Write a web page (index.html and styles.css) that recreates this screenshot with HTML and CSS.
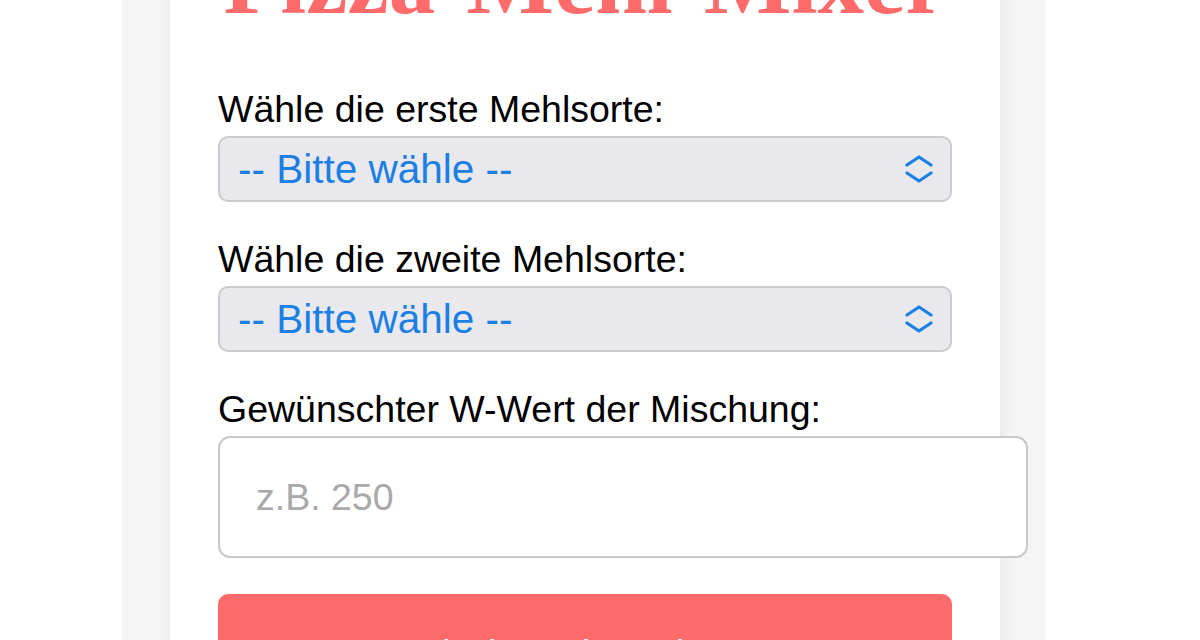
FILE: index.html
```html
<!DOCTYPE html>
<html lang="de">
<head>
    <meta charset="utf-8">
    <title>Pizza-Mehl-Mixer</title>
    <link rel="stylesheet" href="styles.css">
</head>
<body>
    <div class="band">
        <div class="card">
            <h1 class="title">Pizza-Mehl-Mixer</h1>

            <div class="field">
                <label for="mehl1">Wähle die erste Mehlsorte:</label>
                <div class="select-wrap">
                    <select id="mehl1">
                        <option>-- Bitte wähle --</option>
                    </select>
                    <svg class="chevrons" width="28" height="30" viewBox="0 0 28 30">
                        <path d="M2 10 L14 2 L26 10 M2 18 L14 26 L26 18" fill="none" stroke="#1b7fe4" stroke-width="3.2" stroke-linecap="round" stroke-linejoin="round"/>
                    </svg>
                </div>
            </div>

            <div class="field">
                <label for="mehl2">Wähle die zweite Mehlsorte:</label>
                <div class="select-wrap">
                    <select id="mehl2">
                        <option>-- Bitte wähle --</option>
                    </select>
                    <svg class="chevrons" width="28" height="30" viewBox="0 0 28 30">
                        <path d="M2 10 L14 2 L26 10 M2 18 L14 26 L26 18" fill="none" stroke="#1b7fe4" stroke-width="3.2" stroke-linecap="round" stroke-linejoin="round"/>
                    </svg>
                </div>
            </div>

            <div class="field">
                <label for="wwert">Gewünschter W-Wert der Mischung:</label>
                <input type="number" id="wwert" placeholder="z.B. 250">
            </div>

            <button class="calc-btn">Mischung berechnen</button>
        </div>
    </div>
</body>
</html>
```

FILE: styles.css
```css
body {
    margin: 0;
    background: #fff;
    font-family: "Liberation Sans", Arial, sans-serif;
    color: #000;
    overflow: hidden;
}
.band {
    width: 923px;
    margin-left: 122px;
    margin-top: -72px;
    background: #f5f5f5;
    padding-left: 48px;
    box-sizing: border-box;
    min-height: 800px;
}
.card {
    width: 830px;
    box-sizing: border-box;
    padding: 0 48px 40px;
    background: #fff;
    box-shadow: 0 0 16px rgba(0, 0, 0, 0.07);
    min-height: 800px;
}
.title {
    margin: 0 0 53px;
    font-family: "Liberation Serif", "Times New Roman", serif;
    font-size: 93px;
    font-weight: bold;
    color: #ff6b6b;
    text-align: center;
}
.field {
    margin-bottom: 36px;
}
.field label {
    display: block;
    font-size: 37.5px;
    margin-bottom: 5px;
}
.select-wrap {
    position: relative;
}
.select-wrap select {
    -webkit-appearance: none;
    appearance: none;
    width: 100%;
    height: 66px;
    margin: 0;
    padding: 0 60px 0 18px;
    border: 2px solid #cbcbcd;
    border-radius: 10px;
    background: #e9e9ed;
    color: #1b7fe4;
    font-family: "Liberation Sans", Arial, sans-serif;
    font-size: 40.5px;
}
.chevrons {
    position: absolute;
    right: 19px;
    top: 19px;
}
.field input {
    width: 100%;
    height: 118px;
    margin: 0;
    padding: 0 36px;
    border: 2px solid #c8c8c8;
    border-radius: 12px;
    background: #fff;
    font-family: "Liberation Sans", Arial, sans-serif;
    font-size: 37.5px;
}
.field input::placeholder {
    color: #a9a9a9;
}
.calc-btn {
    display: block;
    width: 100%;
    padding: 38px 0 36px;
    border: none;
    border-radius: 10px;
    background: #ff6b6b;
    color: #fff;
    font-family: "Liberation Sans", Arial, sans-serif;
    font-size: 37.5px;
}
```
